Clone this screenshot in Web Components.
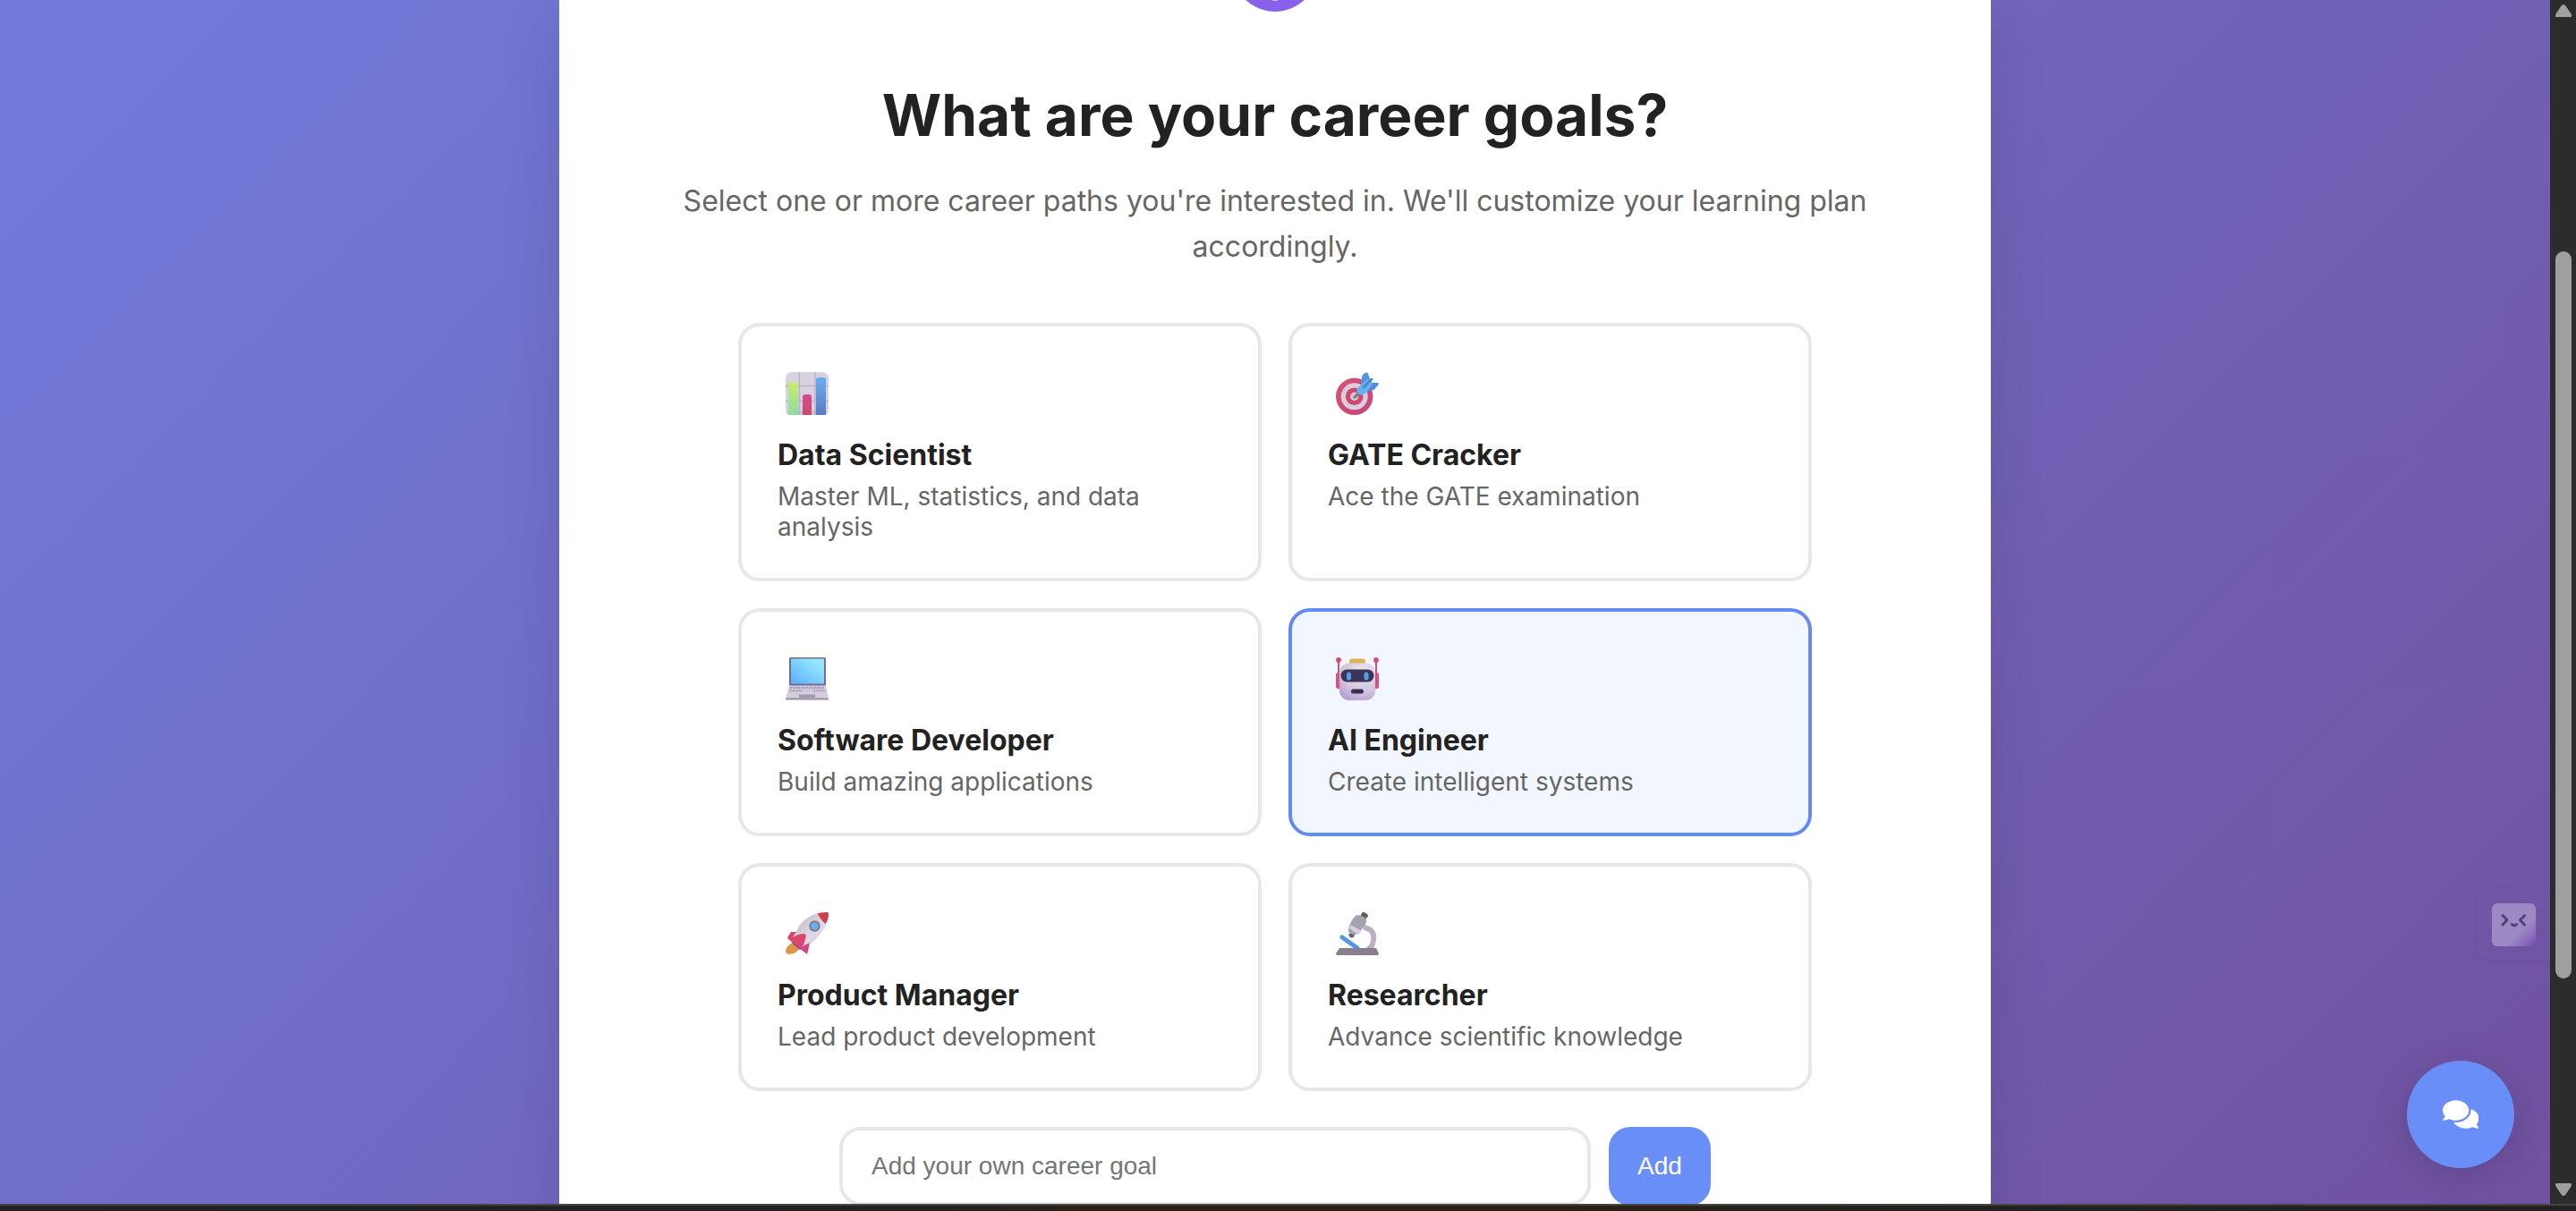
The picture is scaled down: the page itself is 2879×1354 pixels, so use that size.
<!DOCTYPE html>
<html lang="en">
<head>
<meta charset="utf-8">
<title>Career goals</title>
<style>
html,body{margin:0;height:100%;overflow:hidden}
body{font-family:Inter,"Open Sans",sans-serif;color:#222}
</style>
</head>
<body>
<goal-app></goal-app>
<script>
const icons = {
chart:`<defs><linearGradient id="g" x2="0" y2="1"><stop stop-color="#c3ec60"/><stop offset="1" stop-color="#86dc9c"/></linearGradient><linearGradient id="r" x2="0" y2="1"><stop stop-color="#d5418b"/><stop offset="1" stop-color="#c54463"/></linearGradient><linearGradient id="b" x2="0" y2="1"><stop stop-color="#60a9f0"/><stop offset="1" stop-color="#5375c2"/></linearGradient></defs>
<rect width="48" height="48" rx="7" fill="#d5cfdf"/><path d="M15.5 0v48M33 0v48M0 15.500h48M0 32.500h48" stroke="#b9b1c6" stroke-width="1.500"/><path d="M1 45h46" stroke="#a384c2" stroke-width="4" opacity=".25"/>
<path d="M3 48V14q0-2.500 2.500-2.500h6q2.500 0 2.500 2.500v34z" fill="url(#g)"/><path d="M19 48V27.500q0-2.500 2.500-2.500h5q2.500 0 2.500 2.500V48z" fill="url(#r)"/><path d="M34 48V8.500Q34 6 36.500 6h6Q45 6 45 8.500V48z" fill="url(#b)"/>`,
target:`<defs><linearGradient id="t" x2="1" y2="1"><stop stop-color="#d64a6a"/><stop offset="1" stop-color="#c03d77"/></linearGradient></defs>
<circle cx="20.700" cy="27.300" r="20.700" fill="url(#t)"/><circle cx="20.700" cy="27.300" r="15" fill="#d9cbdf"/><circle cx="20.700" cy="27.300" r="9.800" fill="#ce4063"/><circle cx="20.700" cy="27.300" r="4.700" fill="#d2c3d9"/>
<path d="M21 28l7-6" stroke="#777083" stroke-width="3" stroke-linecap="round"/><path d="M28 17L29 6q.3-3 2-4l3-1.500q1.500-.5 2 1L38 8l-6 10z" fill="#4a90e2"/><path d="M30 21l9-9 8 0q1.500.5.500 2l-4 5q-2 2-4 1.500L32 22z" fill="#4a86dd"/><path d="M24 18L35 8q4 0 6 5l-8 11q-4 3-8 0-3-3-1-6z" fill="#5eb0ea"/><path d="M31 17L40 8" stroke="#4280cb" stroke-width="3" stroke-linecap="round"/>`,
laptop:`<defs><linearGradient id="l" x1="1" x2="0" y2="1"><stop offset=".2" stop-color="#8ee5fb"/><stop offset=".9" stop-color="#58b2fa"/></linearGradient></defs>
<rect x="4" y="0" width="41" height="32" rx="1.500" fill="#716293"/><rect x="6" y="1.500" width="37" height="28" fill="url(#l)"/><path d="M4 31.500h41l3 14.500H0z" fill="#d3cbdd"/><path d="M5 34h39M4.500 37.200h40" stroke="#9f95ae" stroke-width="2" stroke-dasharray="2 1"/><path d="M18 37.200h12" stroke="#d3cbdd" stroke-width="1.500"/><rect x="15" y="41.500" width="18" height="3.500" fill="#9c93a9"/><rect y="45.500" width="48" height="2" rx="1" fill="#94869f"/>`,
robot:`<defs><radialGradient id="h" cx=".65" cy=".2" r=".9"><stop stop-color="#ece5f1"/><stop offset=".65" stop-color="#cfc2dc"/><stop offset="1" stop-color="#b496d0"/></radialGradient></defs>
<path d="M3 18V4M45 18V4" stroke="#d74872" stroke-width="2"/><circle cx="3" cy="3" r="2.900" fill="#d74267"/><circle cx="45" cy="3" r="2.900" fill="#d74267"/><rect x="0" y="17" width="6" height="18" rx="2.500" fill="#de477d"/><rect x="42" y="17" width="6" height="18" rx="2.500" fill="#e0457b"/><rect x="15" y="1.500" width="18" height="7" rx="3" fill="#e0b04d"/><rect x="4" y="6.500" width="40" height="41.500" rx="11" fill="url(#h)"/><rect x="5.500" y="13.500" width="37" height="14" rx="7" fill="#322a51"/><rect x="12" y="16.500" width="5" height="9" rx="2.500" fill="#4b9adb"/><rect x="31.500" y="16.500" width="5" height="9" rx="2.500" fill="#4b9adb"/><rect x="17" y="35.500" width="14" height="5" rx="2.500" fill="#2e2544"/>`,
rocket:`<defs><linearGradient id="k" x2="1" y2="1"><stop stop-color="#b8b8b8"/><stop offset=".6" stop-color="#e0d6e8"/><stop offset="1" stop-color="#d0bfdf"/></linearGradient><linearGradient id="f" x2="0" y2="1"><stop stop-color="#d74151"/><stop offset="1" stop-color="#d6388a"/></linearGradient></defs>
<path d="M8 34Q1 37 0 43q0 4 3 3.500 2 1 4-.5 4 1 8-5z" fill="#df9140"/><path d="M7 34l9 8 3-3-9-8z" fill="#39407b"/><path d="M10 28q3-16 20-25 7-3 16-3 2 0 2 2 0 9-5 16Q35 32 22 38z" fill="url(#k)"/><path d="M35.500 1.500Q41-.5 46.500 0 48 0 48 2q0 6-3.500 11Q39 8 35.500 1.500z" fill="#cf3540"/><path d="M6 22h6L8 28q6-4 13-4 3 1 1 6-1 5-3 8l8-4q-1 6-3 13-5-4-9-7l-6-5L2 29q0-1 4-7z" fill="url(#f)"/><circle cx="32.500" cy="15.500" r="6.200" fill="#757484"/><circle cx="32.500" cy="15.500" r="4.200" fill="#65a8ef"/>`,
scope:`<path d="M31 17q13 2 11 14-1 8-7 11" fill="none" stroke="#b9adbd" stroke-width="6"/><path d="M7 28l17 12" stroke="#4b93e2" stroke-width="5" stroke-linecap="round"/><path d="M29 1q1-2 3-1l3 2q1.500 1 .5 3L33 8l-6-3z" fill="#5b5662"/><path d="M14 24h7l-1 4-4 .500z" fill="#5b5662"/><path d="M20 6q2-3 5-3l6 2q4 2 3 6-2 7-12 14-8 0-8-5 1-7 6-14z" fill="#a29dab"/><path d="M17 14l12 7-4 4-10-7z" fill="#d7c8e5"/><path d="M4 40h41l3 6q0 2-3 2H3q-3 0-3-2z" fill="#847788"/>`
};
class GoalIcon extends HTMLElement{
  connectedCallback(){this.attachShadow({mode:'open'}).innerHTML=`<style>:host{display:block;width:48px;height:48px;opacity:.95}svg{display:block;width:48px;height:48px;overflow:visible}</style><svg viewBox="0 0 48 48">${icons[this.getAttribute('name')]}</svg>`}
}
customElements.define('goal-icon',GoalIcon);

class GoalCard extends HTMLElement{
  connectedCallback(){this.attachShadow({mode:'open'}).innerHTML=`<style>
:host{display:flex;flex-direction:column;box-sizing:border-box;border:4px solid #e5e7eb;border-radius:24px;padding:51px 40px 40px;background:#fff}
:host([selected]){border-color:#648bf2;background:#f2f6fe}
goal-icon{margin:0 0 25px 9px}
h3{margin:0;font-size:32px;line-height:40px;font-weight:700;color:#222}
p{margin:9px 0 0;font-size:28px;line-height:34px;color:#666}
</style><goal-icon name="${this.getAttribute('icon')}"></goal-icon><h3><slot name="title"></slot></h3><p><slot></slot></p>`}
}
customElements.define('goal-card',GoalCard);

class GoalEntry extends HTMLElement{
  connectedCallback(){this.attachShadow({mode:'open'}).innerHTML=`<style>
:host{display:flex;justify-content:center;gap:20px;margin-top:40px}
.input,.btn{box-sizing:border-box;height:88px;border-radius:24px;font-family:"Liberation Sans",Arial,sans-serif;font-size:28px;display:flex;align-items:center}
.input{width:840px;border:4px solid #e5e7eb;padding:0 32px;color:#757575}
.btn{width:114px;background:#6a8ef7;color:#fff;justify-content:center}
</style><div class="input"><span>Add your own career goal</span></div><div class="btn"><span>Add</span></div>`}
}
customElements.define('goal-entry',GoalEntry);

class GoalPanel extends HTMLElement{
  connectedCallback(){this.attachShadow({mode:'open'}).innerHTML=`<style>
:host{display:block;box-sizing:border-box;width:1600px;height:1700px;background:#fff;box-shadow:0 20px 60px rgba(0,0,0,.1);flex:none}
.badge{display:block;width:96px;height:96px;margin:-83px auto 0}
h1{margin:77px 0 0;font-size:64px;line-height:78px;font-weight:700;text-align:center;color:#222}
.sub{margin:31px auto 0;width:1340px;font-size:32px;line-height:51.200px;text-align:center;color:#666}
.grid{display:grid;grid-template-columns:585px 585px;grid-template-rows:289px 255px 255px;gap:30px;width:1200px;margin:60px auto 0}
</style>
<svg class="badge" viewBox="0 0 96 96"><circle cx="48" cy="48" r="48" fill="#8860ec"/><circle cx="48" cy="73.800" r="10" fill="#fff"/></svg>
<h1>What are your career goals?</h1>
<div class="sub">Select one or more career paths you're interested in. We'll customize your learning plan accordingly.</div>
<div class="grid">
<goal-card icon="chart"><span slot="title">Data Scientist</span>Master ML, statistics, and data analysis</goal-card>
<goal-card icon="target"><span slot="title">GATE Cracker</span>Ace the GATE examination</goal-card>
<goal-card icon="laptop"><span slot="title">Software Developer</span>Build amazing applications</goal-card>
<goal-card icon="robot" selected><span slot="title">AI Engineer</span>Create intelligent systems</goal-card>
<goal-card icon="rocket"><span slot="title">Product Manager</span>Lead product development</goal-card>
<goal-card icon="scope"><span slot="title">Researcher</span>Advance scientific knowledge</goal-card>
</div><goal-entry></goal-entry>`}
}
customElements.define('goal-panel',GoalPanel);

class ScrollTrack extends HTMLElement{
  connectedCallback(){this.attachShadow({mode:'open'}).innerHTML=`<style>
:host{display:flex;flex-direction:column;align-items:center;box-sizing:border-box;width:29px;height:1346px;background:#2c2c2c;padding:5px 0 9px;color:#9f9f9f}
svg{display:block;width:18px;height:14px;flex:none;fill:currentColor}
.thumb{width:18px;height:813px;border-radius:9px;background:currentColor;margin:262px 0 229px;flex:none}
</style><svg viewBox="0 0 18 14"><path d="M6.500 1.500Q9-1.500 11.500 1.500L17.500 10.500q1.500 3.500-1 3.500h-15q-2.500 0-1-3.500z"/></svg><div class="thumb"></div><svg viewBox="0 0 18 14"><path d="M6.500 12.500Q9 15.500 11.500 12.500L17.500 3.500q1.500-3.500-1-3.500h-15q-2.500 0-1 3.500z"/></svg>`}
}
customElements.define('scroll-track',ScrollTrack);

class ChatButton extends HTMLElement{
  connectedCallback(){this.attachShadow({mode:'open'}).innerHTML=`<style>
:host{display:flex;align-items:center;justify-content:center;width:120px;height:120px;border-radius:50%;background:#6a8ef7;box-shadow:0 8px 40px rgba(0,0,0,.15)}
svg{width:40.500px;height:36px;fill:#fff}
</style><svg viewBox="0 0 576 512"><path d="M416 192c0-88.400-93.100-160-208-160S0 103.600 0 192c0 34.300 14.100 65.900 38 92-13.400 30.200-35.500 54.200-35.800 54.500-2.200 2.300-2.800 5.700-1.500 8.700S4.800 352 8 352c36.600 0 66.900-12.300 88.700-25C129.200 342.600 167.200 352 208 352c114.900 0 208-71.600 208-160zm122 220c23.900-26 38-57.700 38-92 0-66.900-53.500-124.200-129.300-148.100.9 6.600 1.300 13.300 1.300 20.100 0 105.900-107.700 192-240 192-10.800 0-21.300-.8-31.700-1.900C207.800 439.600 281.800 480 368 480c40.800 0 78.800-9.300 111.300-24.900 21.800 12.700 52.200 24.900 88.700 24.900 3.200 0 6.100-1.900 7.300-4.800 1.300-2.900.7-6.300-1.500-8.700-.3-.3-22.400-24.200-35.800-54.500z"/></svg>`}
}
customElements.define('chat-button',ChatButton);

class FaceWidget extends HTMLElement{
  connectedCallback(){this.attachShadow({mode:'open'}).innerHTML=`<style>
:host{display:block;box-sizing:border-box;width:80px;height:80px;padding:16px 0 0 15px;border-radius:12px 0 0 12px;box-shadow:0 1px 5px rgba(50,30,90,.08)}
svg{display:block;width:49px;height:48px}
</style><svg viewBox="0 0 49 48"><defs><linearGradient id="w" x2="1" y2="1"><stop stop-color="#9b8bc4"/><stop offset=".65" stop-color="#9b8ac3"/><stop offset=".82" stop-color="#8b6fbd"/><stop offset="1" stop-color="#7546b5"/></linearGradient></defs><rect width="49" height="48" rx="6" fill="url(#w)"/><path d="M12 13.500l5 5.300-5 5.200M36.500 13.500l-5 5.300 5 5.200M22.500 23.500q2.500 3 5 0" fill="none" stroke="#51417f" stroke-width="3" stroke-linecap="round" stroke-linejoin="round"/></svg>`}
}
customElements.define('face-widget',FaceWidget);

class GoalApp extends HTMLElement{
  connectedCallback(){this.attachShadow({mode:'open'}).innerHTML=`<style>
:host{display:flex;flex-direction:column;width:2879px;height:1354px;overflow:hidden}
.row{display:flex;height:1346px}
main{position:relative;display:flex;justify-content:center;width:2850px;height:1346px;overflow:hidden;background:linear-gradient(135deg,#717fe2 0%,#704e9b 100%) 0 -419px/2850px 2136px no-repeat}
footer{box-sizing:border-box;height:8px;border-top:2px solid #454545;background:linear-gradient(90deg,#222 30%,#282218 42%,#282218 65%,#222 80%)}
face-widget{position:absolute;right:0;top:994px}
chat-button{position:absolute;right:40px;bottom:40px}
</style><div class="row"><main><goal-panel></goal-panel><face-widget></face-widget><chat-button></chat-button></main><scroll-track></scroll-track></div><footer></footer>`}
}
customElements.define('goal-app',GoalApp);
</script>
</body>
</html>
